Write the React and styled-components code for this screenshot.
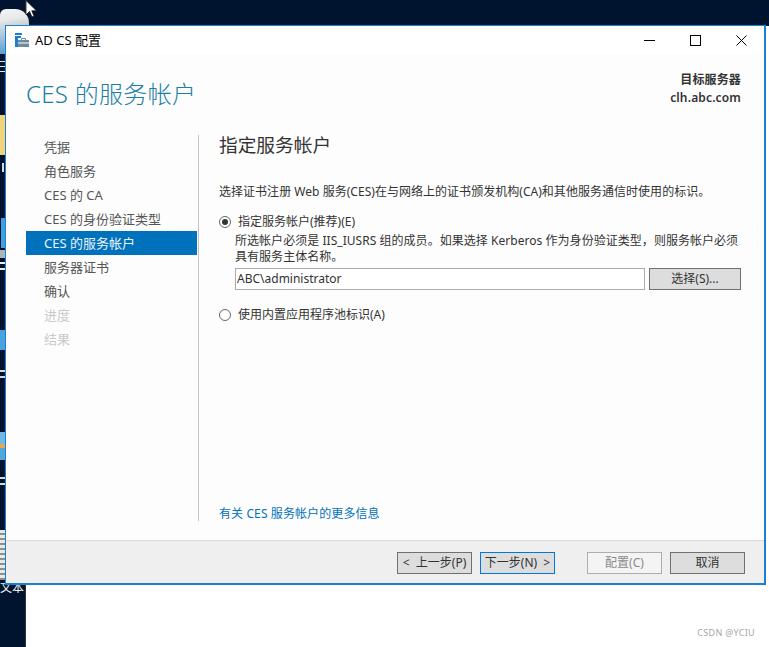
import React from 'react';
import styled, { createGlobalStyle } from 'styled-components';

const FONT = `"Noto Sans", "Noto Sans CJK SC", sans-serif`;

const Global = createGlobalStyle`
  html, body { margin: 0; padding: 0; background: #fff; }
  body { font-family: ${FONT}; }
  * { box-sizing: border-box; }
`;

const Screen = styled.div`
  position: relative;
  width: 769px;
  height: 647px;
  overflow: hidden;
  background: #fff;
`;
const TopBand = styled.div`
  position: absolute; left: 0; top: 0; width: 769px; height: 26px;
  background: #00132f;
`;
const LeftBand = styled.div`
  position: absolute; left: 0; top: 0; width: 26px; height: 647px;
  background: #00142f;
  border-right: 1px solid #2a3444;
`;
const DesktopBit = styled.div`
  position: absolute;
  left: ${p => p.$x || 0}px;
  width: ${p => p.$w || 5}px;
  top: ${p => p.$y}px;
  height: ${p => p.$h}px;
  background: ${p => p.$bg};
`;
const Cloud = styled.div`
  position: absolute;
  left: 0;
  top: 9px;
  width: 29px;
  height: 17px;
  border-radius: 6px 14px 0 0;
  background: linear-gradient(170deg, #f4f5f6 0%, #e6e8ea 55%, #c3c8cc 100%);
`;
const Cursor = styled.svg`
  position: absolute; left: 25px; top: 0;
`;
const DesktopLabel = styled.span`
  position: absolute;
  left: 0;
  top: ${p => p.$y}px;
  font-size: 12px;
  line-height: 14px;
  color: #f1f1f1;
  white-space: nowrap;
`;

const Win = styled.div`
  position: absolute;
  left: 5px; top: 25px;
  width: 761px; height: 560px;
  border: 1px solid #1b80d0;
  border-width: 1px 2px 2px 1px;
  background: #fdfdfd;
  display: flex;
  flex-direction: column;
`;
const TitleBar = styled.div`
  height: 28px;
  flex: none;
  display: flex;
  align-items: center;
  background: #fff;
  padding-left: 9px;
`;
const TitleText = styled.span`
  margin-left: 6px;
  font-size: 13px;
  line-height: 18px;
  color: #000;
`;
const WinControls = styled.div`
  margin-left: auto;
  display: flex;
  align-items: center;
`;
const Ctl = styled.div`
  width: 46px;
  height: 28px;
  display: flex;
  align-items: center;
  justify-content: center;
`;
const Head = styled.div`
  height: 43px;
  flex: none;
  display: flex;
  justify-content: space-between;
  padding: 13px 23px 0 20px;
`;
const PageTitle = styled.h1`
  margin: 11px 0 0;
  font-size: 24px;
  line-height: 32px;
  font-weight: 300;
  color: #1a7ea5;
  letter-spacing: 0.3px;
  white-space: nowrap;
`;
const Target = styled.div`
  margin-top: 4px;
  text-align: right;
  font-size: 12px;
  line-height: 18px;
  font-weight: 600;
  color: #333;
  letter-spacing: 0.15px;
`;
const Body = styled.div`
  flex: 1;
  display: flex;
  padding: 38px 0 0 20px;
  min-height: 0;
`;
const Nav = styled.nav`
  width: 171px;
  flex: none;
  display: flex;
  flex-direction: column;
`;
const NavItem = styled.div`
  height: 24px;
  line-height: 24px;
  padding-left: 18px;
  font-size: 13px;
  color: ${p => (p.$active ? '#eaf4fb' : p.$disabled ? '#c9c9c9' : '#555')};
  background: ${p => (p.$active ? '#0072bc' : 'transparent')};
  white-space: nowrap;
`;
const Divider = styled.div`
  width: 1px;
  background: #c4c4c4;
  margin: 0 0 19px 1px;
  flex: none;
`;
const Main = styled.main`
  flex: 1;
  min-width: 0;
  padding: 0 23px 17px 20px;
  display: flex;
  flex-direction: column;
  color: #333;
`;
const Heading = styled.h2`
  margin: 0;
  font-size: 18.7px;
  line-height: 20px;
  font-weight: 400;
  color: #333;
  white-space: nowrap;
`;
const Lead = styled.p`
  margin: 28px 0 0;
  font-size: 12px;
  line-height: 18px;
  letter-spacing: 0.03px;
  white-space: nowrap;
`;
const RadioRow = styled.div`
  display: flex;
  align-items: center;
  gap: 7px;
  font-size: 12px;
  line-height: 18px;
  margin-top: ${p => p.$mt}px;
  white-space: nowrap;
`;
const RadioDot = styled.span`
  width: 12px;
  height: 12px;
  border-radius: 50%;
  border: 1px solid #666;
  background: #fff;
  display: flex;
  align-items: center;
  justify-content: center;
  &::after {
    content: '';
    display: ${p => (p.$on ? 'block' : 'none')};
    width: 6px;
    height: 6px;
    border-radius: 50%;
    background: #333;
  }
`;
const Indent = styled.div`
  padding: 2px 0 0 16px;
`;
const Desc = styled.p`
  margin: 0;
  font-size: 12px;
  line-height: 16px;
  letter-spacing: 0.04px;
  white-space: nowrap;
`;
const PickRow = styled.div`
  display: flex;
  gap: 4px;
  margin-top: 3px;
`;
const TextField = styled.div`
  width: 410px;
  flex: none;
  height: 22px;
  border: 1px solid #ababb3;
  background: #fff;
  padding-left: 1px;
  font-size: 12px;
  line-height: 20px;
  color: #333;
`;
const Btn = styled.div`
  height: 22px;
  flex: none;
  border: 1px solid ${p => (p.$focus ? '#0078d7' : p.$off ? '#adadad' : '#707070')};
  background: ${p => (p.$off ? '#f4f4f4' : '#dddddd')};
  color: ${p => (p.$off ? '#8a8a8a' : '#333')};
  font-size: 12px;
  line-height: 20px;
  text-align: center;
  white-space: pre;
  width: ${p => p.$w || 75}px;
`;
const MoreLink = styled.a`
  margin-top: auto;
  font-size: 12px;
  line-height: 18px;
  letter-spacing: 0.1px;
  color: #0072bc;
  white-space: nowrap;
`;
const Footer = styled.div`
  flex: none;
  height: 43px;
  border-top: 1px solid #d9d9d9;
  background: #efefef;
  display: flex;
  align-items: flex-start;
  padding: 11px 0 0 391px;
`;
const FooterGap = styled.div`
  width: ${p => p.$w}px;
  flex: none;
`;
const Watermark = styled.span`
  position: absolute;
  right: 14px;
  top: 627px;
  font-size: 9px;
  line-height: 12px;
  letter-spacing: 0.3px;
  color: #a6a6a6;
`;

const AppIcon = () => (
  <svg width="14" height="14" viewBox="0 0 14 14">
    <rect x="0" y="0" width="7" height="2" fill="#1b80d0" />
    <rect x="0" y="3" width="3" height="11" fill="#1b80d0" />
    <rect x="3" y="3" width="3" height="2" fill="#1b80d0" />
    <rect x="3" y="7" width="11" height="7" fill="#6d8a9e" />
    <rect x="3" y="9.5" width="11" height="1" fill="#fff" />
    <path d="M6.5 7V5.5h4V7" fill="none" stroke="#6d8a9e" />
  </svg>
);

const steps = [
  ['凭据'],
  ['角色服务'],
  ['CES 的 CA'],
  ['CES 的身份验证类型'],
  ['CES 的服务帐户', 'active'],
  ['服务器证书'],
  ['确认'],
  ['进度', 'disabled'],
  ['结果', 'disabled'],
];

const desktopBits = [
  { y: 26, h: 28, bg: 'linear-gradient(#cfdbe4, #5e9fd0)' },
  { y: 61, h: 1, bg: '#e6e6e6' },
  { y: 66, h: 1, bg: '#e6e6e6' },
  { y: 71, h: 1, bg: '#e6e6e6' },
  { y: 115, h: 40, bg: '#f3d27c' },
  { y: 163, h: 9, bg: '#d8d8d8', x: 2, w: 2 },
  { y: 218, h: 30, bg: '#3f9fe0', x: 1, w: 4 },
  { y: 250, h: 8, bg: '#aeb4ba' },
  { y: 262, h: 2, bg: '#eee' },
  { y: 268, h: 2, bg: '#eee' },
  { y: 330, h: 20, bg: '#4aa3e0' },
  { y: 370, h: 2, bg: '#d8d8d8' },
  { y: 376, h: 2, bg: '#d8d8d8' },
  { y: 432, h: 12, bg: '#6fb9e6' },
  { y: 444, h: 4, bg: '#e9a94a' },
  { y: 448, h: 12, bg: '#4fa7da' },
  { y: 477, h: 2, bg: '#d8d8d8' },
  { y: 483, h: 2, bg: '#d8d8d8' },
  { y: 530, h: 50, bg: 'repeating-linear-gradient(#e8e8e8 0 3px, #8d8d8d 3px 5px)' },
];

export default function App() {
  return (
    <>
      <Global />
      <Screen>
        <TopBand />
        <LeftBand />
        <Cloud />
        <Cursor width="12" height="18" viewBox="0 0 12 18">
          <path d="M1 0.5V15L4.5 11.5L7 17L9 16L6.8 10.8H11.5Z" fill="#fff" stroke="#111" strokeWidth="0.8" />
        </Cursor>
        {desktopBits.map(b => (
          <DesktopBit key={b.y} $y={b.y} $h={b.h} $bg={b.bg} $x={b.x} $w={b.w} />
        ))}
        <DesktopLabel $y={581}>文本</DesktopLabel>
        <Win>
          <TitleBar>
            <AppIcon />
            <TitleText>AD CS 配置</TitleText>
            <WinControls>
              <Ctl>
                <svg width="11" height="11" viewBox="0 0 11 11"><path d="M0 5.5H11" stroke="#000" /></svg>
              </Ctl>
              <Ctl>
                <svg width="11" height="11" viewBox="0 0 11 11"><rect x="0.5" y="0.5" width="10" height="10" fill="none" stroke="#000" /></svg>
              </Ctl>
              <Ctl>
                <svg width="11" height="11" viewBox="0 0 11 11"><path d="M0.5 0.5L10.5 10.5M10.5 0.5L0.5 10.5" stroke="#000" /></svg>
              </Ctl>
            </WinControls>
          </TitleBar>
          <Head>
            <PageTitle>CES 的服务帐户</PageTitle>
            <Target>目标服务器<br />clh.abc.com</Target>
          </Head>
          <Body>
            <Nav>
              {steps.map(([label, state]) => (
                <NavItem key={label} $active={state === 'active'} $disabled={state === 'disabled'}>{label}</NavItem>
              ))}
            </Nav>
            <Divider />
            <Main>
              <Heading>指定服务帐户</Heading>
              <Lead>选择证书注册 Web 服务(CES)在与网络上的证书颁发机构(CA)和其他服务通信时使用的标识。</Lead>
              <RadioRow $mt={12}><RadioDot $on />指定服务帐户(推荐)(E)</RadioRow>
              <Indent>
                <Desc>所选帐户必须是 IIS_IUSRS 组的成员。如果选择 Kerberos 作为身份验证类型，则服务帐户必须</Desc>
                <Desc>具有服务主体名称。</Desc>
                <PickRow>
                  <TextField>ABC\administrator</TextField>
                  <Btn $w={92}>选择(S)...</Btn>
                </PickRow>
              </Indent>
              <RadioRow $mt={16}><RadioDot />使用内置应用程序池标识(A)</RadioRow>
              <MoreLink>有关 CES 服务帐户的更多信息</MoreLink>
            </Main>
          </Body>
          <Footer>
            <Btn>{'<  上一步(P)'}</Btn>
            <FooterGap $w={8} />
            <Btn $focus>{'下一步(N)  >'}</Btn>
            <FooterGap $w={32} />
            <Btn $off>配置(C)</Btn>
            <FooterGap $w={8} />
            <Btn>取消</Btn>
          </Footer>
        </Win>
        <Watermark>CSDN @YCIU</Watermark>
      </Screen>
    </>
  );
}
